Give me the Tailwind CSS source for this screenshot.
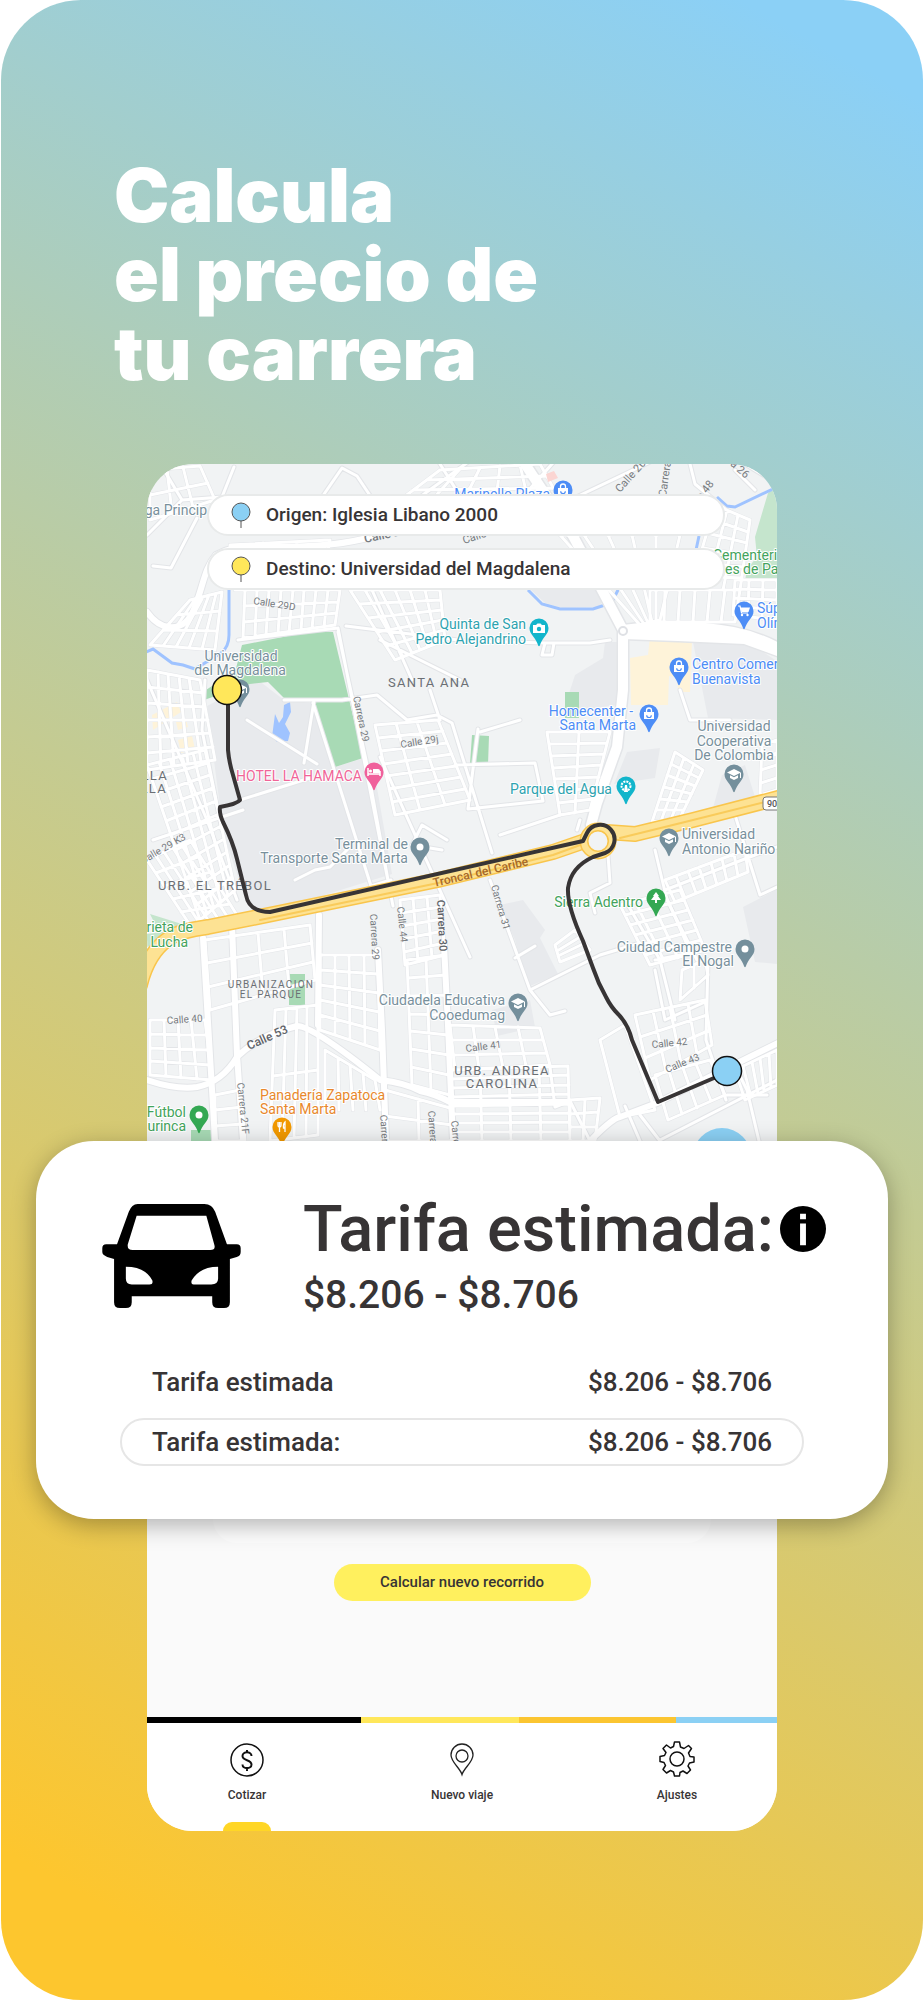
<!DOCTYPE html>
<html lang="es">
<head>
    <meta charset="UTF-8">
    <meta name="viewport" content="width=device-width, initial-scale=1.0">
    <title>Calcula el precio de tu carrera</title>
    <script src="https://cdn.jsdelivr.net/npm/@tailwindcss/browser@4"></script>
</head>
<body class="bg-white font-['Roboto',sans-serif] text-[#373435]">
    <main class="mx-px min-h-screen rounded-[80px] bg-[linear-gradient(209deg,#8bd0f6_4%,#fdc62e_94%)] px-[35px] pt-[156px] pb-[160px]">
        <h1 class="pl-[78px] font-['Inter',sans-serif] text-[74px] leading-[79px] font-black text-white">Calcula<br>el precio de<br>tu carrera</h1>

        <!-- Map -->
        <section class="relative mx-[111px] mt-[71px] overflow-hidden rounded-t-[46px]">
            <svg class="block w-full" viewBox="147 464 630 677" aria-label="Mapa del recorrido">
                <defs>
                    <path id="pin" d="M0-9.500a9.500 9.500 0 0 1 9.500 9.500c0 3.500-1.500 5.500-3.500 8.200C3.500 11.500 2 14 .8 17.500q-.8 1.500-1.600 0C-2 14-3.500 11.500-6 8.200-8 5.500-9.500 3.500-9.500 0A9.500 9.500 0 0 1 0-9.500z"/>
                    <g id="bag" fill="#fff"><path d="M-5-2h10v7h-10z"/><path d="M-2.500-2v-1.500a2.500 2.500 0 0 1 5 0V-2" fill="none" stroke="#fff" stroke-width="1.300"/><path d="M-2.300 1.200a2.300 2.300 0 0 0 4.600 0" fill="none" stroke="#4d8df6" stroke-width="1.200"/></g>
                    <g id="cap" fill="#fff"><path d="M0-5l7 3.500L0 2l-7-3.500z"/><path d="M-4 1.200L0 3.200l4-2V4L0 6l-4-2z"/><path d="M6-1h1v5H6z"/></g>
                    <path id="streets" d=""/>
                    <path id="lanes" d="M147 535l35-35 40-3 12-30M182 500l-18-30M153 566l18 2 26-50M320 500l22-32 15 8 20 30M420 497l55-40M440 464l25 40M570 500l80-38M520 500l40-45M690 464l5 20 30 25M735 470l20 20M745 464l33 20M610 640l-20 3h-44l-80-2-120-15M545 643l-3 12h10l2-12M238 640l100-12M338 628l55 278M313 703l58 183 20-6M284 700h58l35-5 30 25 30-5 15 8 40 130M247 720l70 44M314 701l-10 62M240 800l70-22M205 680l-3 50 20 100M380 757l90 200M338 632l28 128 22 120M295 880l20-10 15-3 20-20M147 680l60 140 30 80M153 840l90-30M430 690l10 30M460 680l-80-40M372 590l40 90M680 690l10 30 40 0M625 900l35 60 15 60M655 850l12 50 30 60M665 890l90-35 22-8M735 815l25 80 17-8M560 815l-60 20M490 880l40 110 20 25 15-4M530 990l70-35 40-12M515 958l20-12M608 855l2 28-20 10 5 20M455 765l80-2 8 38-75 8 10-80M580 820l-3 10M447 840l-25-15-10 20 30 5M520 720l-40 12M655 960l50-10M708 960l-2 80 20 60M655 970l10 50 40-18M640 1115l20 26M590 1141l-20-40-15 6-5-40M640 1141l-15-35M660 1140l117-60M737 1070l10 20 12 51M727 1095l40 0"/>
                    <path id="roads" d="M147 612q10 14 22 15 17 2 25-18c10-25 10-40 22-54q20-12 60-8 60 0 95-10M147 1080q30 10 50 7 25-5 40-30 22-22 60-31 16 0 83 54 26 3 40 11 15 3 30 11h117M593 1138q20-20 27-21l37-14 121-60M232 925l5 130 6 86M319 915l-1 110M203 938l12 202M378 950l4 80 4 111M444 945l4 80 5 116"/>
                    <path id="avenues" d="M525 464l48 72 30 56 20 38v60l-6 57-20 56-6 22M623 630q60-8 110 2 25 5 45 16M623 634l55 2 67 3 33 12"/>
                    <path id="highway" d="M140 985q8-32 28-46 10-8 40-12l70-14 160-33 115-28 32-11 22-9 28 2 58-14 85-22"/>
                </defs>
                <path fill="#f1f3f4" d="M147 464h630v677H147z"/>
                <!-- Blocks -->
                <g fill="#e8eaed">
                    <path d="M207 706l51-26 26 20 29 3 19 65 32-10 9 7 19 109-122 38-23-9-25-73-2-23z"/>
                    <path d="M531 590l14 13 17 5 38-1 2-8-7-9zM605 642h12l1 63-55 7 12-37 28-17zM693 642l52-2 33 22v58l-70-2zM627 752l33-4-5 30-41 6zM745 765l10 32-42 11 9-33zM743 907l35-18v75l-23-2zM500 905l23-5 22 30-5 8 18 36-30 13-13-47zM492 1010l38-10 5 27-38 9z"/>
                </g>
                <g fill="#fef3d9">
                    <path d="M630 658l18-3 2-18 42 3-2 52-12 0-1-15-8-1-1 29h-37zM152 715l25-13 4 10-28 18zM178 740l14-4 3 13-14 4zM176 722l10-3 2 8-10 3z"/>
                </g>
                <g fill="#a8dab5">
                    <path d="M242 645l71-14 20 1 30 126-31 10-18-67-30-3-16-16-18 2-46 16-1-8 12-8 17 0z"/>
                    <path d="M565 692h14v26h-14zM472 735l17 1-1 29-18-1zM289 974h16v31h-16zM191 1130h20v11h-20z"/>
                </g>
                <g fill="#c5e5cd">
                    <path d="M768 493l9-7v95h-32l2-12 10-12-2-20zM633 628l80-1 38 8-50 0zM150 914l35 11-8 6-20-3zM147 934l22-3-2 10-20 6z"/>
                </g>
                <path fill="#9fc3ff" d="M284 705l6-3 1 10-6 12 5 9-2 8-11 1-5-5 3-23 4 9 4-6z"/>
                <g fill="none" stroke="#9fc3ff" stroke-width="3">
                    <path d="M229 588v47q0 12-8 18l-26 16-12-4-11-2-19-14-7 3M528 590l14 14 18 5 33 0 12-4M619 588l-6 12M699 536l-3 14M717 497l10 9 8 1 42-20"/>
                </g>
                <!-- Streets -->
                <g fill="none" stroke-linejoin="round" stroke-linecap="round">
                    <g stroke="#e3e5e8">
                        <use href="#streets" stroke-width="4"/>
                        <use href="#lanes" stroke-width="5"/>
                        <use href="#roads" stroke-width="8"/>
                        <use href="#avenues" stroke-width="13"/>
                    </g>
                    <g stroke="#fff">
                        <use href="#streets" stroke-width="3"/>
                        <use href="#lanes" stroke-width="3"/>
                        <use href="#roads" stroke-width="6"/>
                        <use href="#avenues" stroke-width="10"/>
                    </g>
                    <circle cx="623" cy="631" r="4" stroke="#dfe1e5" stroke-width="2" fill="#fff"/>
                    <use href="#highway" stroke="#f9c54c" stroke-width="16"/>
                    <use href="#highway" stroke="#fde293" stroke-width="13"/>
                    <path d="M260 920l178-37 115-28 30-11M620 838l65-16 92-23" stroke="#f9cb5b" stroke-width="2"/>
                    <circle cx="598" cy="841" r="14" stroke="#f9c54c" stroke-width="9" fill="#f1f3f4"/>
                    <circle cx="598" cy="841" r="14" stroke="#fde293" stroke-width="6"/>
                </g>
                <path fill="#fbd5d2" d="M546 474l8-3 4 7-10 4z"/>

                <!-- Street names -->
                <g class="text-[10px]" fill="#777b80">
                    <text transform="translate(253 604) rotate(9)">Calle 29D</text>
                    <text class="text-[11px]" transform="translate(620 493) rotate(-48)">Calle 26</text>
                    <text class="text-[11px]" transform="translate(666 497) rotate(-82)">Carrera 27</text>
                    <text class="text-[11px]" transform="translate(720 456) rotate(42)">rera 26</text>
                    <text class="text-[11px]" transform="translate(690 515) rotate(-52)">Calle 48</text>
                    <text class="text-xs font-medium" transform="translate(365 543) rotate(-12)">Calle 29</text>
                    <text class="text-[11px]" transform="translate(464 544) rotate(-18)">Calle 30</text>
                    <text transform="translate(353 697) rotate(78)">Carrera 29</text>
                    <text transform="translate(401 748) rotate(-9)">Calle 29j</text>
                    <text transform="translate(143 864) rotate(-30)">Calle 29 K3</text>
                    <text transform="translate(370 914) rotate(87)">Carrera 29</text>
                    <text transform="translate(397 907) rotate(84)">Calle 44</text>
                    <text class="text-[11px] font-medium" transform="translate(437 900) rotate(87)" fill="#5f6368">Carrera 30</text>
                    <text transform="translate(491 886) rotate(74)">Carrera 31</text>
                    <text transform="translate(167 1024) rotate(-4)">Calle 40</text>
                    <text class="text-xs font-medium" transform="translate(249 1050) rotate(-24)" fill="#5f6368">Calle 53</text>
                    <text transform="translate(237 1083) rotate(84)">Carrera 21F</text>
                    <text transform="translate(380 1115) rotate(86)">Carrera 28</text>
                    <text transform="translate(428 1111) rotate(86)">Carrera 29</text>
                    <text transform="translate(451 1121) rotate(84)">Carrera 30</text>
                    <text transform="translate(466 1052) rotate(-7)">Calle 41</text>
                    <text transform="translate(652 1048) rotate(-5)">Calle 42</text>
                    <text transform="translate(667 1073) rotate(-22)">Calle 43</text>
                </g>
                <text class="text-xs font-medium" fill="#a5682a" transform="translate(434 887) rotate(-13)">Troncal del Caribe</text>
                <g class="text-[13px] tracking-widest" fill="#6b6f74">
                    <text x="388" y="687">SANTA ANA</text>
                    <text x="168" y="780" text-anchor="end">VILLA</text>
                    <text x="167" y="793" text-anchor="end">BELLA</text>
                    <text x="158" y="890">URB. EL TRÉBOL</text>
                    <text x="502" y="1075" text-anchor="middle">URB. ANDREA</text>
                    <text x="502" y="1088" text-anchor="middle">CAROLINA</text>
                    <g class="text-[10px]">
                        <text x="271" y="988" text-anchor="middle">URBANIZACION</text>
                        <text x="271" y="998" text-anchor="middle">EL PARQUE</text>
                    </g>
                </g>

                <!-- Places -->
                <g class="text-sm" fill="#78909c" stroke="#fff" stroke-width="2" stroke-linejoin="round" paint-order="stroke">
                    <text x="207" y="515" text-anchor="end">Bodega Princip</text>
                    <text x="241" y="661" text-anchor="middle">Universidad</text>
                    <text x="240" y="675" text-anchor="middle">del Magdalena</text>
                    <text x="408" y="849" text-anchor="end">Terminal de</text>
                    <text x="408" y="863" text-anchor="end">Transporte Santa Marta</text>
                    <text x="734" y="731" text-anchor="middle">Universidad</text>
                    <text x="734" y="746" text-anchor="middle">Cooperativa</text>
                    <text x="734" y="760" text-anchor="middle">De Colombia</text>
                    <text x="682" y="839">Universidad</text>
                    <text x="682" y="854">Antonio Nariño</text>
                    <text x="732" y="952" text-anchor="end">Ciudad Campestre</text>
                    <text x="734" y="966" text-anchor="end">El Nogal</text>
                    <text x="505" y="1005" text-anchor="end">Ciudadela Educativa</text>
                    <text x="505" y="1020" text-anchor="end">Cooedumag</text>
                    <g fill="#4d8df6">
                        <text x="550" y="499" text-anchor="end">Marinello Plaza</text>
                        <text x="757" y="613">Súper</text>
                        <text x="757" y="628">Olímpica</text>
                        <text x="692" y="669">Centro Comercial</text>
                        <text x="692" y="684">Buenavista</text>
                        <text x="633" y="716" text-anchor="end">Homecenter -</text>
                        <text x="636" y="730" text-anchor="end">Santa Marta</text>
                    </g>
                    <g fill="#2ea3b0">
                        <text x="526" y="629" text-anchor="end">Quinta de San</text>
                        <text x="526" y="644" text-anchor="end">Pedro Alejandrino</text>
                        <text x="612" y="794" text-anchor="end">Parque del Agua</text>
                    </g>
                    <g fill="#43a35c">
                        <text x="713" y="560">Cementerio</text>
                        <text x="725" y="574">es de Paz</text>
                        <text x="193" y="932" text-anchor="end">Glorieta de</text>
                        <text x="188" y="947" text-anchor="end">la Lucha</text>
                        <text x="643" y="907" text-anchor="end">Sierra Adentro</text>
                        <text x="186" y="1117" text-anchor="end">Fútbol</text>
                        <text x="186" y="1131" text-anchor="end">Curinca</text>
                    </g>
                    <text x="362" y="781" text-anchor="end" fill="#f06598">HOTEL LA HAMACA</text>
                    <g fill="#e8882c">
                        <text x="260" y="1100">Panadería Zapatoca</text>
                        <text x="260" y="1114">Santa Marta</text>
                    </g>
                </g>

                <!-- Pins -->
                <g transform="translate(240 689)"><use href="#pin" fill="#748f9c"/><use href="#cap"/></g>
                <g transform="translate(420 847)"><use href="#pin" fill="#748f9c"/><circle r="3.500" fill="#fff"/></g>
                <g transform="translate(734 774)"><use href="#pin" fill="#748f9c"/><use href="#cap"/></g>
                <g transform="translate(669 838)"><use href="#pin" fill="#748f9c"/><use href="#cap"/></g>
                <g transform="translate(745 949)"><use href="#pin" fill="#748f9c"/><circle r="3.500" fill="#fff"/></g>
                <g transform="translate(518 1003)"><use href="#pin" fill="#748f9c"/><use href="#cap"/></g>
                <g transform="translate(563 490)"><use href="#pin" fill="#4d8df6"/><use href="#bag"/></g>
                <g transform="translate(679 667)"><use href="#pin" fill="#4d8df6"/><use href="#bag"/></g>
                <g transform="translate(649 714)"><use href="#pin" fill="#4d8df6"/><use href="#bag"/></g>
                <g transform="translate(744 611)"><use href="#pin" fill="#4d8df6"/><path d="M-6-5h2l1.500 7H4" fill="none" stroke="#fff" stroke-width="1.200"/><path d="M-3.500-3.500H6L4.500 1h-7z" fill="#fff"/><circle cx="-2" cy="4" r="1.200" fill="#fff"/><circle cx="3.500" cy="4" r="1.200" fill="#fff"/></g>
                <g transform="translate(539 628)"><use href="#pin" fill="#12b5cb"/><path d="M-6-3h3l1.500-1.500h3L3-3h3v8H-6z" fill="#fff"/><circle cy="1" r="2.200" fill="#12b5cb"/></g>
                <g transform="translate(626 786)"><use href="#pin" fill="#12b5cb"/><circle r="4.500" fill="none" stroke="#fff" stroke-width="2" stroke-dasharray="2 1"/><path d="M-1-1h2l1 7h-4z" fill="#fff"/></g>
                <g transform="translate(374 772)"><use href="#pin" fill="#f0609b"/><path d="M-6-4v8M6 4V-1M-6 2H6" stroke="#fff" stroke-width="1.500"/><path d="M-1-3h5q2 0 2 2v2h-7z" fill="#fff"/><circle cx="-3.500" cy="-1" r="1.500" fill="#fff"/></g>
                <g transform="translate(656 898)"><use href="#pin" fill="#34a853"/><path d="M0-6l3 4H2l3 4H1v3h-2V2h-4l3-4h-1z" fill="#fff"/></g>
                <g transform="translate(199 1115)"><use href="#pin" fill="#34a853"/><circle r="3.500" fill="#fff"/></g>
                <g transform="translate(282 1127)"><use href="#pin" fill="#f29900"/><path d="M-4-5v3q0 2 1.500 2T-1-2v-3M-2.500-5V5M3 5V-5Q1-3 1.500 1H3" fill="none" stroke="#fff" stroke-width="1.300"/></g>
                <g><rect x="763" y="797" width="18" height="13" rx="3" fill="#fff" stroke="#777" stroke-width="1"/><text class="text-[9px] font-medium" x="767" y="807" fill="#555">90</text></g>

                <!-- Route -->
                <path fill="none" stroke="#373435" stroke-width="4" stroke-linejoin="round" d="M228 700v50q1 12 5 25l7 25q-3 4-20 7-1 6 3 15 10 20 14 37l9 36q3 17 24 17l313-71 4-8a14.500 14.500 0 1 1 18 20l-12 4q-22 10-25 31-1 18 15 53l10 27q5 15 13 29 5 10 12 17 10 10 14 26l26 62 70-30"/>
                <circle cx="227" cy="690" r="14.500" fill="#ffe75a" stroke="#111" stroke-width="1.500"/>
                <circle cx="727" cy="1071" r="14.500" fill="#8bd0f4" stroke="#111" stroke-width="1.500"/>
                <circle cx="722" cy="1157" r="29" fill="#8bd0f4"/>
            </svg>

            <div class="absolute top-[30px] right-[52px] left-[60px] flex flex-col gap-3 text-[19px] font-medium">
                <p class="flex h-[42px] items-center gap-[15px] rounded-full border-2 border-[#e8eaea] bg-white pl-[22px]">
                    <svg class="h-[26px] w-5" viewBox="0 0 20 26" fill="none" stroke="#555" aria-hidden="true"><path d="M10 18v8"/><circle cx="10" cy="10" r="9" fill="#8bd0f4"/></svg>
                    Origen: Iglesia Libano 2000
                </p>
                <p class="flex h-[42px] items-center gap-[15px] rounded-full border-2 border-[#e8eaea] bg-white pl-[22px]">
                    <svg class="h-[26px] w-5" viewBox="0 0 20 26" fill="none" stroke="#555" aria-hidden="true"><path d="M10 18v8"/><circle cx="10" cy="10" r="9" fill="#ffe75a"/></svg>
                    Destino: Universidad del Magdalena
                </p>
            </div>
        </section>

        <!-- Fare card -->
        <section class="relative rounded-[58px] bg-white px-[84px] pt-[56px] pb-[53px] font-medium shadow-[0_6px_24px_rgba(0,0,0,0.3)]">
            <div class="-mr-[22px] flex items-start justify-between">
                <svg class="-ml-5 mt-1.5 h-[106px] w-[142px] shrink-0" viewBox="0 0 144 108" aria-hidden="true">
                    <path fill-rule="evenodd" d="M38 1h68q8 0 11 8l12 33h10q4 0 4 4v4q0 4-4 5l-7 2v44q0 6-6 6h-6q-6 0-6-6v-6H32v6q0 6-6 6h-6q-6 0-6-6V57l-7-2q-5-2-5-5v-4q0-4 4-4h11L29 9q3-8 9-8zM37 13l-9 29q-1 6 5 6h79q6 0 4-6l-8-29zM26 65v12q0 6 6 6h18q4 0 3-4-7-14-27-14zM120 65q-19 0-27 14-1 4 2 4h18q7 0 7-6z"/>
                </svg>
                <div class="flex items-start gap-[6px]">
                    <div>
                        <h2 class="text-[65px] leading-[64px] font-medium">Tarifa estimada:</h2>
                        <p class="mt-2.5 text-[39px] leading-[48px]">$8.206 - $8.706</p>
                    </div>
                    <button type="button" class="mt-[9px]" aria-label="Información">
                        <svg class="size-[46px]" viewBox="0 0 47 47"><circle cx="23.500" cy="23.500" r="23.500"/><path fill="#fff" d="M20.500 8h6v5.500h-6zM20.500 18h6v22h-6z"/></svg>
                    </button>
                </div>
            </div>
            <dl class="mt-[39px] flex flex-col gap-3 text-[26px] leading-[44px]">
                <div class="flex justify-between border-2 border-transparent px-[30px]">
                    <dt>Tarifa estimada</dt>
                    <dd>$8.206 - $8.706</dd>
                </div>
                <div class="flex justify-between rounded-full border-2 border-[#e6e6e6] px-[30px]">
                    <dt>Tarifa estimada:</dt>
                    <dd>$8.206 - $8.706</dd>
                </div>
            </dl>
        </section>

        <!-- Bottom of the app screen -->
        <section class="mx-[111px] overflow-hidden rounded-b-[46px] bg-[#fafafa] font-medium">
            <div class="mx-[66px] h-6 rounded-b-[46px] bg-[#fdfdfd]"></div>
            <div class="flex justify-center pt-[21px] pb-[116px]">
                <button type="button" class="h-[37px] w-[257px] rounded-full bg-[#fff05e] text-[15px]">Calcular nuevo recorrido</button>
            </div>
            <div class="flex h-1.5">
                <div class="w-[34%] bg-black"></div>
                <div class="w-[25%] bg-[#ffe75a]"></div>
                <div class="w-[25%] bg-[#fbc531]"></div>
                <div class="flex-1 bg-[#8bd0f4]"></div>
            </div>
            <nav class="flex justify-between bg-white px-[68px] pt-[18px] text-center text-xs">
                <a href="#" class="relative flex w-16 flex-col items-center pb-7">
                    <svg class="size-9" viewBox="0 0 36 36" fill="none" stroke="#111" stroke-width="1.500" aria-hidden="true">
                        <circle cx="18" cy="19" r="16"/>
                        <path stroke-width="2" d="M22.500 15c0-5-9-5-9 0s9 3.500 9 8.500-9 5-9 0M18 9v3M18 26v4"/>
                    </svg>
                    <span class="mt-2.5">Cotizar</span>
                    <span class="absolute bottom-0 h-[9px] w-12 rounded-t-xl bg-[#ffd626]"></span>
                </a>
                <a href="#" class="flex w-20 flex-col items-center">
                    <svg class="size-9" viewBox="0 0 36 36" fill="none" stroke="#222" stroke-width="1.300" aria-hidden="true">
                        <path d="M18 33.500C16 27 7 21 7 14a11 11 0 0 1 22 0c0 7-9 13-11 19.500z"/>
                        <circle cx="18" cy="15" r="6"/>
                    </svg>
                    <span class="mt-2.5">Nuevo viaje</span>
                </a>
                <a href="#" class="flex w-16 flex-col items-center">
                    <svg class="size-9" viewBox="0 0 36 36" fill="none" stroke="#111" stroke-width="1.500" stroke-linejoin="round" aria-hidden="true">
                        <path d="M15.500 1h5l1 5 3.500 1.500 4.500-3 3 3-3 4.500L31 15.500l4 .5v5l-4.500 1-1.500 3 2.500 4-3.500 3.500-4-2.500-3 1.500-.5 3.500h-5l-1-4-3-1.500-4 2.500-3.500-3.500 2.500-4-1.500-3L1 20.500v-5l4.500-1L7 11.500l-3-4 3.500-3.500 4 3 3-1.500z"/>
                        <circle cx="18" cy="18" r="7"/>
                    </svg>
                    <span class="mt-2.5">Ajustes</span>
                </a>
            </nav>
        </section>
    </main>

    <script>
        // Each district: four corners (clockwise), then the number of streets across and down
        const districts = [
            [150, 470, 200, 466, 215, 500, 150, 520, 3, 2],
            [230, 545, 330, 540, 320, 590, 235, 590, 3, 3],
            [245, 590, 340, 590, 335, 625, 243, 638, 8, 3],
            [350, 590, 440, 590, 445, 640, 395, 660, 6, 5],
            [440, 470, 540, 464, 560, 500, 400, 500, 5, 3],
            [560, 535, 680, 535, 660, 620, 640, 625, 5, 1],
            [650, 590, 740, 590, 735, 622, 650, 622, 6, 1],
            [715, 505, 750, 520, 740, 590, 690, 590, 3, 6],
            [735, 580, 777, 580, 777, 620, 733, 615, 3, 4],
            [190, 600, 222, 592, 215, 650, 150, 645, 5, 3],
            [147, 670, 200, 680, 215, 760, 147, 770, 5, 6],
            [147, 765, 205, 750, 235, 890, 200, 920, 5, 11],
            [147, 860, 190, 840, 240, 920, 190, 925, 5, 5],
            [375, 725, 438, 720, 470, 800, 395, 815, 3, 7],
            [547, 732, 610, 732, 590, 810, 560, 815, 2, 7],
            [675, 752, 703, 770, 680, 818, 652, 822, 3, 6],
            [762, 745, 777, 740, 777, 790, 760, 795, 1, 4],
            [665, 880, 745, 850, 748, 872, 675, 902, 7, 1],
            [620, 905, 680, 890, 705, 950, 650, 965, 4, 6],
            [400, 900, 440, 895, 445, 955, 405, 965, 3, 5],
            [205, 940, 310, 925, 315, 980, 210, 1010, 4, 3],
            [320, 955, 378, 955, 380, 1050, 320, 1030, 4, 5],
            [150, 1020, 205, 1020, 212, 1080, 150, 1075, 4, 4],
            [275, 1010, 318, 1005, 318, 1135, 270, 1141, 4, 2],
            [325, 1050, 375, 1080, 380, 1110, 325, 1110, 4, 0],
            [407, 960, 445, 955, 450, 1095, 412, 1085, 2, 7],
            [385, 1090, 450, 1108, 453, 1141, 385, 1141, 2, 2],
            [450, 1025, 540, 1028, 550, 1065, 455, 1070, 4, 3],
            [450, 1070, 568, 1066, 570, 1141, 452, 1141, 4, 8],
            [570, 1100, 600, 1098, 595, 1141, 570, 1141, 2, 3],
            [600, 1040, 625, 1025, 655, 1110, 620, 1117, 1, 1],
            [635, 1015, 705, 1000, 712, 1045, 650, 1080, 4, 3],
            [680, 1000, 708, 975, 705, 960, 682, 970, 2, 1],
            [655, 1075, 710, 1060, 725, 1095, 668, 1120, 4, 1],
            [735, 1070, 777, 1050, 777, 1085, 745, 1100, 5, 1],
            [215, 1095, 240, 1090, 245, 1141, 215, 1141, 1, 3],
            [555, 945, 575, 930, 590, 950, 560, 962, 1, 3]
        ];

        function lines([ax, ay, bx, by, cx, cy, dx, dy, across, down]) {
            const mix = (p, q, t) => Math.round(p + (q - p) * t);
            let d = '';
            for (let i = 0; i <= across; i++) {
                const t = i / Math.max(across, 1);
                d += `M${mix(ax, bx, t)} ${mix(ay, by, t)}L${mix(dx, cx, t)} ${mix(dy, cy, t)}`;
            }
            for (let i = 0; i <= down; i++) {
                const t = i / Math.max(down, 1);
                d += `M${mix(ax, dx, t)} ${mix(ay, dy, t)}L${mix(bx, cx, t)} ${mix(by, cy, t)}`;
            }
            return d;
        }

        document.getElementById('streets').setAttribute('d', districts.map(lines).join(''));
    </script>
</body>
</html>
